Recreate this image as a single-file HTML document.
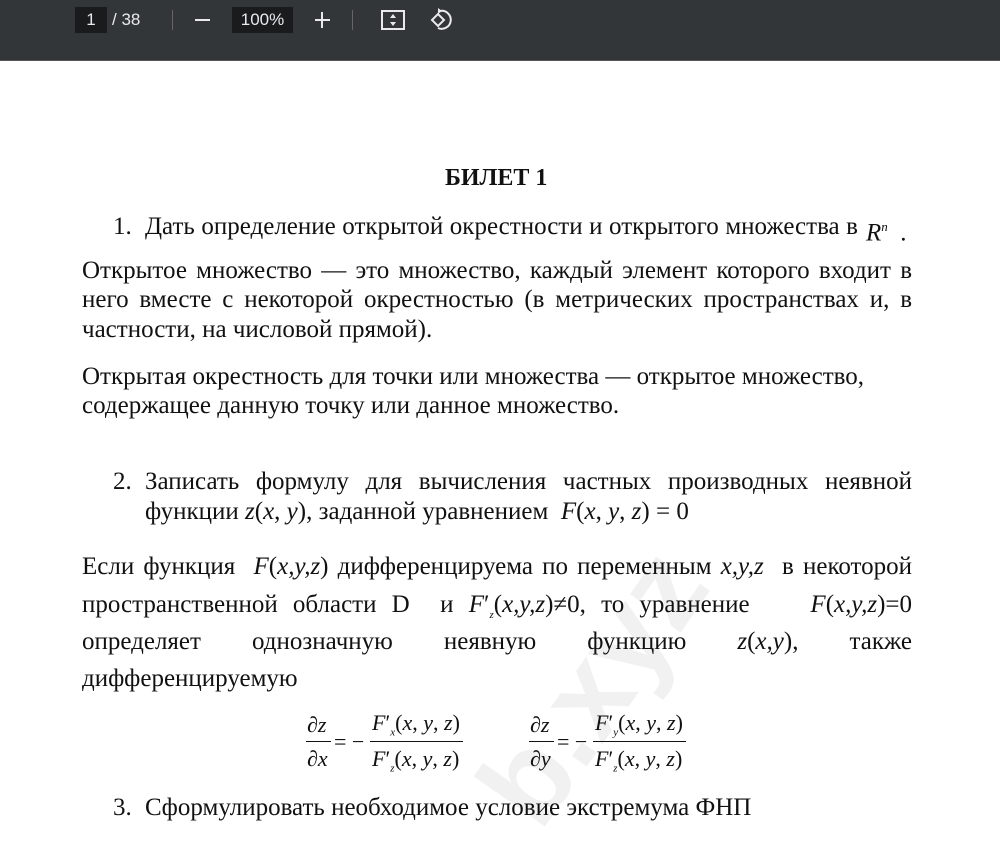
<!DOCTYPE html>
<html><head><meta charset="utf-8"><style>
*{margin:0;padding:0;box-sizing:border-box}
body{width:1000px;height:825px;overflow:hidden;background:#fff;position:relative;font-family:"Liberation Serif",serif;color:#111}
.tb{position:absolute;left:0;top:0;width:1000px;height:61px;background:#323639;border-bottom:1px solid #555;color:#e8eaed;font-family:"Liberation Sans",sans-serif;font-size:17px;z-index:2}
.tb div{position:absolute}
.box{background:#191b1c;top:7px;height:26px;line-height:26px;text-align:center}
.sep{top:10px;width:1px;height:20px;background:#666}
.l{position:absolute;font-size:25px;white-space:nowrap;line-height:28px;letter-spacing:0;z-index:1}
.j{text-align:justify;text-align-last:justify;white-space:normal}
i{font-style:italic}
.f{position:absolute;font-size:22px;white-space:nowrap;line-height:24px;z-index:1}
.wm{position:absolute;left:450px;top:770px;font:bold 120px "Liberation Sans",sans-serif;color:#f1f1f1;transform:rotate(-55deg);transform-origin:left top;z-index:0}
</style></head><body>
<div class="wm">b.xyz</div>
<div class="tb">
<div class="box" style="left:75px;width:32px">1</div>
<div style="left:112px;top:7px;line-height:26px">/ 38</div>
<div class="sep" style="left:172px"></div>
<div style="left:195px;top:19px;width:15px;height:2px;background:#e8eaed"></div>
<div class="box" style="left:232px;width:61px">100%</div>
<div style="left:315px;top:19px;width:15px;height:2px;background:#e8eaed"></div>
<div style="left:321px;top:12px;width:2px;height:16px;background:#e8eaed"></div>
<div class="sep" style="left:352px"></div>
<svg style="position:absolute;left:380px;top:8px" width="26" height="26" viewBox="0 0 26 26"><rect x="2" y="3" width="22" height="18" fill="none" stroke="#e8eaed" stroke-width="2"/><path d="M13 6l-3 4h6zM13 18l-3-4h6z" fill="#e8eaed"/></svg>
<svg style="position:absolute;left:428px;top:7px" width="26" height="26" viewBox="0 0 26 26"><path d="M4 13l6-6 6 6-6 6z" fill="none" stroke="#e8eaed" stroke-width="2"/><path d="M12 4a9 9 0 1 1-2 17" fill="none" stroke="#e8eaed" stroke-width="2"/><path d="M10 1l4 3-4 3z" fill="#e8eaed"/></svg>
</div>

<div class="l" style="left:445px;top:164px;font-weight:bold;font-size:24px">БИЛЕТ 1</div>
<div class="l" style="left:113px;top:213px">1.</div>
<div class="l j" style="left:145px;top:213px;width:713px">Дать определение открытой окрестности и открытого множества в</div>
<div class="l" style="left:866px;top:213px"><i>R</i><sup style="font-size:13px;font-style:italic">n</sup> &nbsp;.</div>

<div class="l j" style="left:82px;top:257px;width:830px">Открытое множество — это множество, каждый элемент которого входит в</div>
<div class="l j" style="left:82px;top:286px;width:830px">него вместе с некоторой окрестностью (в метрических пространствах и, в</div>
<div class="l" style="left:82px;top:316px">частности, на числовой прямой).</div>

<div class="l" style="left:82px;top:363px">Открытая окрестность для точки или множества — открытое множество,</div>
<div class="l" style="left:82px;top:392px">содержащее данную точку или данное множество.</div>

<div class="l" style="left:113px;top:468px">2.</div>
<div class="l j" style="left:145px;top:468px;width:767px">Записать формулу для вычисления частных производных неявной</div>
<div class="l" style="left:145px;top:498px">функции <i>z</i>(<i>x</i>, <i>y</i>), заданной уравнением &nbsp;<i>F</i>(<i>x</i>, <i>y</i>, <i>z</i>) = 0</div>

<div class="l j" style="left:82px;top:553px;width:830px">Если функция &nbsp;<i>F</i>(<i>x,y,z</i>) дифференцируема по переменным <i>x,y,z</i> &nbsp;в некоторой</div>
<div class="l j" style="left:82px;top:591px;width:830px">пространственной области D &nbsp;и <i>F</i>′<sub style="font-size:11px"><i>z</i></sub>(<i>x,y,z</i>)≠0, то уравнение &nbsp;&nbsp; <i>F</i>(<i>x,y,z</i>)=0</div>
<div class="l j" style="left:82px;top:628px;width:830px">определяет однозначную неявную функцию <i>z</i>(<i>x,y</i>), также</div>
<div class="l" style="left:82px;top:665px">дифференцируемую</div>

<div class="f" style="left:307px;top:713px"><i>∂z</i></div>
<div style="position:absolute;left:306px;top:741px;width:25px;height:1px;background:#111"></div>
<div class="f" style="left:307px;top:747px"><i>∂x</i></div>
<div class="f" style="left:334px;top:730px">= −</div>
<div class="f" style="left:372px;top:711px"><i>F</i>′<sub style="font-size:11px"><i>x</i></sub>(<i>x</i>, <i>y</i>, <i>z</i>)</div>
<div style="position:absolute;left:370px;top:741px;width:93px;height:1px;background:#111"></div>
<div class="f" style="left:372px;top:747px"><i>F</i>′<sub style="font-size:11px"><i>z</i></sub>(<i>x</i>, <i>y</i>, <i>z</i>)</div>

<div class="f" style="left:530px;top:713px"><i>∂z</i></div>
<div style="position:absolute;left:529px;top:741px;width:25px;height:1px;background:#111"></div>
<div class="f" style="left:530px;top:747px"><i>∂y</i></div>
<div class="f" style="left:557px;top:730px">= −</div>
<div class="f" style="left:595px;top:711px"><i>F</i>′<sub style="font-size:11px"><i>y</i></sub>(<i>x</i>, <i>y</i>, <i>z</i>)</div>
<div style="position:absolute;left:593px;top:741px;width:93px;height:1px;background:#111"></div>
<div class="f" style="left:595px;top:747px"><i>F</i>′<sub style="font-size:11px"><i>z</i></sub>(<i>x</i>, <i>y</i>, <i>z</i>)</div>

<div class="l" style="left:113px;top:794px">3.</div>
<div class="l" style="left:145px;top:794px">Сформулировать необходимое условие экстремума ФНП</div>
</body></html>
